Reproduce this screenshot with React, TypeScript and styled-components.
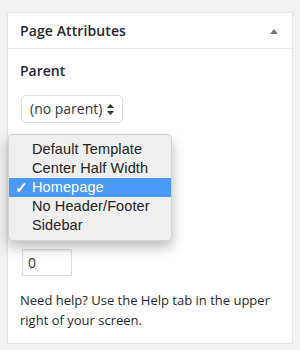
import React from "react";
import styled, { createGlobalStyle } from "styled-components";

const Global = createGlobalStyle`
  html, body { margin: 0; padding: 0; background: #f1f1f1; }
  body { font-family: "Open Sans", "Liberation Sans", sans-serif; color: #23282d; }
  * { box-sizing: border-box; }
`;

const Page = styled.div`
  padding: 12px 8px 0 7px;
`;

const Panel = styled.div`
  width: 286px;
  background: #fff;
  border: 1px solid #e5e5e5;
  box-shadow: 0 1px 1px rgba(0, 0, 0, 0.04);
`;

const Header = styled.div`
  height: 36px;
  display: flex;
  align-items: center;
  justify-content: space-between;
  padding: 0 12px 0 12px;
  border-bottom: 1px solid #eee;
`;

const Title = styled.h2`
  margin: 0;
  font-size: 14px;
  font-weight: 600;
  line-height: 21px;
  letter-spacing: 0.1px;
  color: #23282d;
`;

const Toggle = styled.span`
  width: 0;
  height: 0;
  margin-right: 2px;
  margin-top: 1px;
  border-left: 4px solid transparent;
  border-right: 4px solid transparent;
  border-bottom: 5px solid #72777c;
`;

const Body = styled.div`
  position: relative;
  padding: 11px 12px 13px;
  display: flex;
  flex-direction: column;
  align-items: flex-start;
`;

const Label = styled.p`
  margin: 0;
  font-size: 14px;
  font-weight: 600;
  line-height: 21px;
`;

const Select = styled.div`
  margin: 14px 0 0 1px;
  height: 28px;
  display: flex;
  align-items: center;
  gap: 5px;
  padding: 0 8px 0 8px;
  border: 1px solid #ddd;
  border-radius: 5px;
  background: #fff;
  font-size: 14px;
  line-height: 20px;
  color: #32373c;
`;

/* The template field lies under the open menu, so only its room is kept. */
const MenuSlot = styled.div`
  height: 126px;
`;

const Input = styled.div`
  margin: 0 0 0 2px;
  width: 50px;
  height: 27px;
  border: 1px solid #ddd;
  padding: 0 5px;
  font-size: 14px;
  line-height: 25px;
  color: #32373c;
  box-shadow: inset 0 1px 2px rgba(0, 0, 0, 0.07);
`;

const Help = styled.p`
  margin: 15px 0 0;
  font-size: 13px;
  line-height: 19.5px;
  color: #23282d;
`;

const Menu = styled.ul`
  position: absolute;
  left: 0;
  top: 85px;
  width: 164px;
  margin: 0;
  padding: 5px 0;
  list-style: none;
  background: #efefef;
  border: 1px solid rgba(0, 0, 0, 0.12);
  border-radius: 5px;
  box-shadow: 0 6px 14px rgba(0, 0, 0, 0.28);
  font-family: "Liberation Sans", Arial, sans-serif;
  font-size: 14.5px;
  letter-spacing: 0.1px;
  z-index: 2;
`;

const Option = styled.li<{ $active?: boolean }>`
  position: relative;
  height: 19px;
  line-height: 19px;
  padding-left: 23px;
  background: ${(p) => (p.$active ? "#4a99f8" : "transparent")};
  color: ${(p) => (p.$active ? "#fff" : "#222")};
`;

const Check = styled.span`
  position: absolute;
  left: 6px;
  top: 0;
  font-size: 15px;
  font-weight: 700;
`;

const Arrows = () => (
  <svg width="7" height="11" viewBox="0 0 7 11">
    <path d="M3.5 0 L7 4 L0 4 Z" fill="#333" />
    <path d="M3.5 11 L7 7 L0 7 Z" fill="#333" />
  </svg>
);

const options = [
  "Default Template",
  "Center Half Width",
  "Homepage",
  "No Header/Footer",
  "Sidebar",
];

export default function App() {
  return (
    <>
      <Global />
      <Page>
        <Panel>
          <Header>
            <Title>Page Attributes</Title>
            <Toggle />
          </Header>
          <Body>
            <Label>Parent</Label>
            <Select>
              (no parent) <Arrows />
            </Select>
            <MenuSlot />
            <Input>0</Input>
            <Help>
              Need help? Use the Help tab in the upper right of your screen.
            </Help>
            <Menu>
              {options.map((o) => (
                <Option key={o} $active={o === "Homepage"}>
                  {o === "Homepage" && <Check>✓</Check>}
                  {o}
                </Option>
              ))}
            </Menu>
          </Body>
        </Panel>
      </Page>
    </>
  );
}
